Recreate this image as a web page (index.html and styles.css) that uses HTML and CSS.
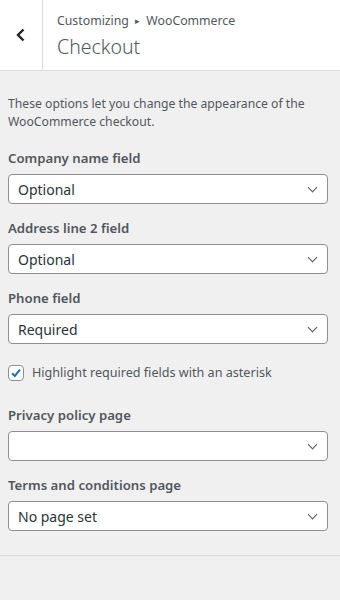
FILE: index.html
```html
<!DOCTYPE html>
<html lang="en">

<head>
	<meta charset="UTF-8">
	<meta name="viewport" content="width=device-width, initial-scale=1.0">
	<title>Customizing Checkout</title>
	<link rel="stylesheet" href="styles.css">
</head>

<body>
	<div class="panel">
		<div class="panel-header">
			<button class="back-btn" aria-label="Back">
				<svg width="12" height="16" viewBox="0 0 12 16">
					<path d="M8.5 2.5 L3 8 L8.5 13.5" fill="none" stroke="#1d2327" stroke-width="2.4" />
				</svg>
			</button>
			<div class="title-group">
				<div class="crumbs">Customizing <span class="sep">&#9656;</span> WooCommerce</div>
				<h1>Checkout</h1>
			</div>
		</div>

		<div class="panel-body">
			<p class="intro">These options let you change the appearance of the WooCommerce checkout.</p>

			<div class="field">
				<label for="company">Company name field</label>
				<div class="select-wrap">
					<select id="company">
						<option>Optional</option>
					</select>
				</div>
			</div>

			<div class="field">
				<label for="address2">Address line 2 field</label>
				<div class="select-wrap">
					<select id="address2">
						<option>Optional</option>
					</select>
				</div>
			</div>

			<div class="field">
				<label for="phone">Phone field</label>
				<div class="select-wrap">
					<select id="phone">
						<option>Required</option>
					</select>
				</div>
			</div>

			<div class="check-row">
				<span class="checkbox">
					<svg width="14" height="14" viewBox="0 0 14 14">
						<path d="M3 7.2 L5.8 10 L11 3.6" fill="none" stroke="#2271b1" stroke-width="2" />
					</svg>
				</span>
				<span>Highlight required fields with an asterisk</span>
			</div>

			<div class="field">
				<label for="privacy">Privacy policy page</label>
				<div class="select-wrap">
					<select id="privacy">
						<option></option>
					</select>
				</div>
			</div>

			<div class="field">
				<label for="terms">Terms and conditions page</label>
				<div class="select-wrap">
					<select id="terms">
						<option>No page set</option>
					</select>
				</div>
			</div>
		</div>
	</div>
</body>

</html>
```

FILE: styles.css
```css
* {
	margin: 0;
	padding: 0;
	box-sizing: border-box;
}

body {
	font-family: 'Noto Sans', 'Open Sans', sans-serif;
	background: #f0f0f1;
	color: #50575e;
	font-size: 13px;
	min-height: 100vh;
}

.panel-header {
	display: flex;
	background: #fff;
	height: 71px;
	border-bottom: 1px solid #dcdcde;
}

.back-btn {
	width: 43px;
	border: none;
	border-right: 1px solid #dcdcde;
	background: #fff;
	display: flex;
	align-items: center;
	justify-content: center;
	cursor: pointer;
}

.title-group {
	padding: 12px 14px 0;
}

.crumbs {
	font-size: 12.3px;
	line-height: 18px;
	color: #50575e;
}

.sep {
	font-size: 9px;
	padding: 0 3px;
	vertical-align: 1px;
}

.title-group h1 {
	font-size: 19.5px;
	font-weight: 300;
	line-height: 28px;
	margin-top: 3px;
	color: #50575e;
}

.panel-body {
	padding: 24px 12px 24px 8px;
	border-bottom: 1px solid #dcdcde;
}

.intro {
	font-size: 12.2px;
	line-height: 18px;
	margin-bottom: 17px;
}

.field {
	margin-bottom: 14px;
}

.field:last-child {
	margin-bottom: 0;
}

label {
	display: block;
	font-size: 13.2px;
	font-weight: 600;
	line-height: 20px;
	color: #50575e;
	margin-bottom: 6px;
}

.select-wrap {
	position: relative;
}

.select-wrap::after {
	content: '';
	position: absolute;
	right: 12px;
	top: 10px;
	width: 6px;
	height: 6px;
	border-right: 1.5px solid #50575e;
	border-bottom: 1.5px solid #50575e;
	transform: rotate(45deg);
	pointer-events: none;
}

select {
	appearance: none;
	-webkit-appearance: none;
	width: 100%;
	height: 30px;
	padding: 0 24px 0 9px;
	font-family: inherit;
	font-size: 14px;
	color: #2c3338;
	background: #fff;
	border: 1px solid #8c8f94;
	border-radius: 4px;
}

.check-row {
	display: flex;
	align-items: center;
	gap: 8px;
	font-size: 12.6px;
	color: #50575e;
	margin: 20px 0 24px;
}

.checkbox {
	width: 16px;
	height: 16px;
	border: 1px solid #8c8f94;
	border-radius: 4px;
	background: #fff;
	display: flex;
	align-items: center;
	justify-content: center;
	flex-shrink: 0;
}
```
